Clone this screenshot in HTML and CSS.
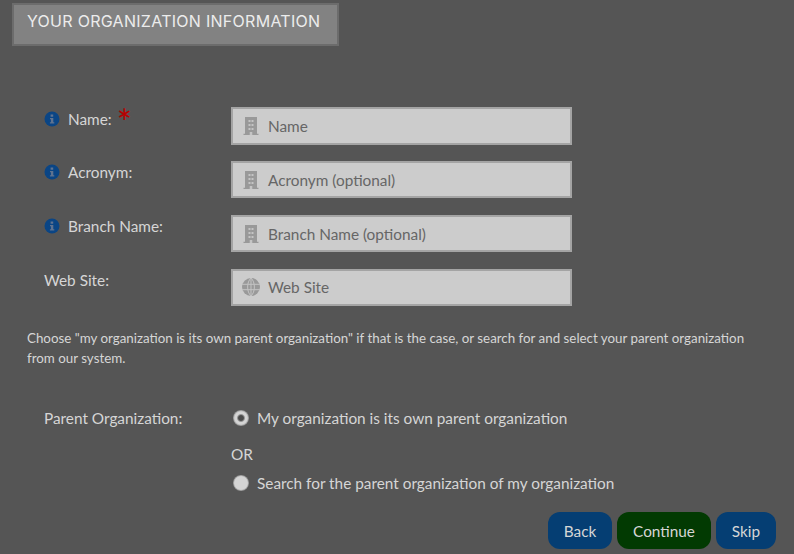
FILE: index.html
```html
<!DOCTYPE html>
<html lang="en">
<head>
<meta charset="utf-8">
<title>Your Organization Information</title>
<link rel="stylesheet" href="styles.css">
</head>
<body>
<svg class="defs" width="0" height="0" aria-hidden="true">
  <symbol id="info" viewBox="0 0 16 16">
    <circle cx="8" cy="8" r="7.500" fill="#0a4585"/>
    <path d="M6.600 3.600h2.600v2.200H6.600zM6 6.900h3.300v4.400h1v1.300H5.900v-1.300h1V8.200H6z" fill="#5f7390"/>
  </symbol>
  <symbol id="building" viewBox="0 0 16 18">
    <path fill="#999" d="M2 0h12v16.800h1.500V18H.5v-1.200H2z"/>
    <path fill="#c4c4c4" d="M5.500 3h2v2h-2zM8.500 3h2v2h-2zM5.500 7h2v2h-2zM8.500 7h2v2h-2zM5.500 11h2v2h-2zM8.500 11h2v2h-2zM6.700 15h2.600v3H6.700z"/>
  </symbol>
  <symbol id="globe" viewBox="0 0 18 18">
    <circle cx="9" cy="9" r="9" fill="#999"/>
    <path d="M0 6.300h18M0 11.700h18M9 0v18M9 0C4.500 4 4.500 14 9 18M9 0c4.500 4 4.500 14 0 18" fill="none" stroke="#c4c4c4" stroke-width="1"/>
  </symbol>
</svg>

<main class="page">
  <h1 class="banner">YOUR ORGANIZATION INFORMATION</h1>

  <form class="form">
    <div class="row tall">
      <label class="label"><svg class="info"><use href="#info"/></svg>Name:<span class="req">*</span></label>
      <div class="field"><svg class="ficon"><use href="#building"/></svg><span>Name</span></div>
    </div>
    <div class="row">
      <label class="label"><svg class="info"><use href="#info"/></svg>Acronym:</label>
      <div class="field"><svg class="ficon"><use href="#building"/></svg><span>Acronym (optional)</span></div>
    </div>
    <div class="row">
      <label class="label"><svg class="info"><use href="#info"/></svg>Branch Name:</label>
      <div class="field"><svg class="ficon"><use href="#building"/></svg><span>Branch Name (optional)</span></div>
    </div>
    <div class="row">
      <label class="label">Web Site:</label>
      <div class="field raised"><svg class="ficon globe"><use href="#globe"/></svg><span>Web Site</span></div>
    </div>

    <p class="note">Choose "my organization is its own parent organization" if that is the case, or search for and select your parent organization from our system.</p>

    <div class="parent">
      <div class="plabel">Parent Organization:</div>
      <div class="choices">
        <div class="choice"><span class="radio on"></span>My organization is its own parent organization</div>
        <div class="or">OR</div>
        <div class="choice"><span class="radio"></span>Search for the parent organization of my organization</div>
      </div>
    </div>

    <div class="actions">
      <button type="button" class="btn blue back">Back</button>
      <button type="button" class="btn green cont">Continue</button>
      <button type="button" class="btn blue skip">Skip</button>
    </div>
  </form>
</main>
</body>
</html>
```

FILE: styles.css
```css
html, body {
  margin: 0;
  height: 100%;
  overflow: hidden;
  background: #555555;
}
body {
  font-family: Lato, "Open Sans", sans-serif;
  font-size: 15.35px;
  color: #d6d6d6;
}
.defs { position: absolute; }
.page {
  padding: 3px 18px 0 12px;
}
.banner {
  box-sizing: border-box;
  width: 327px;
  height: 43px;
  margin: 0;
  padding: 0 0 8px 13px;
  display: flex;
  align-items: center;
  background: #828282;
  border: 2px solid #6c6c6c;
  font-family: Inter, sans-serif;
  font-size: 16px;
  font-weight: 400;
  letter-spacing: 0.28px;
  white-space: nowrap;
  color: #ececec;
}
.form {
  padding-top: 61px;
}
.row {
  display: flex;
  height: 37px;
  margin-bottom: 17px;
  padding-left: 32px;
}
.row.tall {
  height: 38px;
  margin-bottom: 16px;
}
.label {
  width: 187px;
  display: flex;
  align-items: flex-start;
  padding-top: 2px;
  line-height: 18px;
  box-sizing: border-box;
}
.tall .label {
  padding-top: 3px;
}
.info {
  width: 16px;
  height: 16px;
  margin: 1px 8px 0 0;
}
.req {
  color: #b80000;
  font-size: 36px;
  line-height: 24px;
  margin-left: 5px;
}
.field {
  box-sizing: border-box;
  width: 341px;
  height: 100%;
  display: flex;
  align-items: center;
  gap: 9px;
  padding-left: 10px;
  background: #cccccc;
  border: 2px solid #a4a4a4;
  color: #666666;
}
.field.raised {
  padding-bottom: 1px;
}
.ficon {
  width: 16px;
  height: 18px;
  flex: none;
}
.ficon.globe {
  width: 18px;
  margin-left: -1px;
  margin-right: -1px;
}
.note {
  margin: 0;
  padding: 5px 30px 0 15px;
  font-size: 13.35px;
  line-height: 20px;
}
.parent {
  display: flex;
  padding: 40px 0 0 32px;
}
.plabel {
  width: 187px;
  line-height: 20px;
}
.choice {
  display: flex;
  align-items: center;
  gap: 9px;
  line-height: 20px;
}
.or {
  margin-top: 16px;
  margin-bottom: 9px;
  line-height: 20px;
}
.radio {
  box-sizing: border-box;
  width: 16px;
  height: 16px;
  margin: 0 -1px 0 2px;
  border-radius: 50%;
  background: radial-gradient(circle closest-side, #d4d4d4 80%, #8a8a8a 100%);
}
.radio.on {
  background: radial-gradient(circle closest-side, #4a4a4a 30%, #d4d4d4 55%, #d4d4d4 78%, #8a8a8a 100%);
}
.actions {
  display: flex;
  justify-content: flex-end;
  gap: 5px;
  margin-top: 19px;
}
.btn {
  height: 37px;
  padding: 0;
  border: 0;
  border-radius: 12px;
  font: inherit;
  color: #d6d6d6;
}
.blue { background: #053e73; }
.green { background: #023a02; }
.back { width: 64px; }
.cont { width: 94px; }
.skip { width: 60px; }
```
